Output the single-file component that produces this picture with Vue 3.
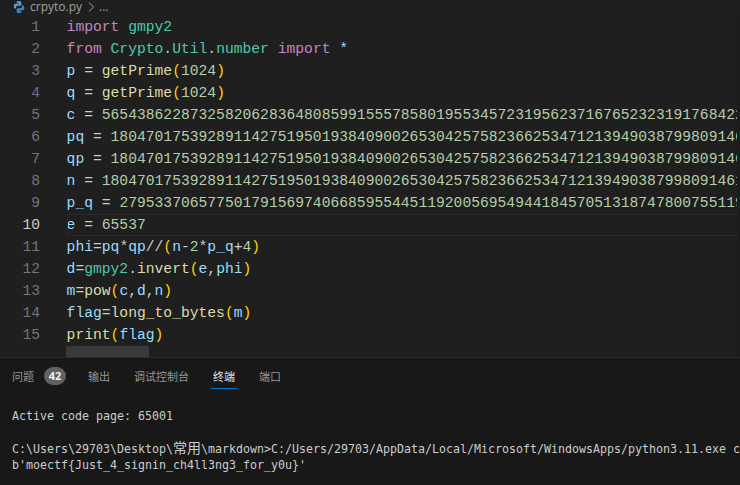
<script setup>
const kw = 'k', fn = 'f', v = 'v', num = 'n', cls = 'c', op = 'o', br = 'b';
const lines = [
  [[kw, 'import'], [op, ' '], [cls, 'gmpy2']],
  [[kw, 'from'], [op, ' '], [cls, 'Crypto'], [op, '.'], [cls, 'Util'], [op, '.'], [cls, 'number'], [op, ' '], [kw, 'import'], [op, ' '], [v, '*']],
  [[v, 'p'], [op, ' = '], [fn, 'getPrime'], [br, '('], [num, '1024'], [br, ')']],
  [[v, 'q'], [op, ' = '], [fn, 'getPrime'], [br, '('], [num, '1024'], [br, ')']],
  [[v, 'c'], [op, ' = '], [num, '5654386228732582062836480859915557858019553457231956237167652323191768422']],
  [[v, 'pq'], [op, ' = '], [num, '180470175392891142751950193840900265304257582366253471213949038799809146']],
  [[v, 'qp'], [op, ' = '], [num, '180470175392891142751950193840900265304257582366253471213949038799809146']],
  [[v, 'n'], [op, ' = '], [num, '1804701753928911427519501938409002653042575823662534712139490387998091461']],
  [[v, 'p_q'], [op, ' = '], [num, '27953370657750179156974066859554451192005695494418457051318747800755119']],
  [[v, 'e'], [op, ' = '], [num, '65537']],
  [[v, 'phi'], [op, '='], [v, 'pq'], [op, '*'], [v, 'qp'], [op, '//'], [br, '('], [v, 'n'], [op, '-'], [num, '2'], [op, '*'], [v, 'p_q'], [op, '+'], [num, '4'], [br, ')']],
  [[v, 'd'], [op, '='], [cls, 'gmpy2'], [op, '.'], [fn, 'invert'], [br, '('], [v, 'e'], [op, ','], [v, 'phi'], [br, ')']],
  [[v, 'm'], [op, '='], [fn, 'pow'], [br, '('], [v, 'c'], [op, ','], [v, 'd'], [op, ','], [v, 'n'], [br, ')']],
  [[v, 'flag'], [op, '='], [fn, 'long_to_bytes'], [br, '('], [v, 'm'], [br, ')']],
  [[fn, 'print'], [br, '('], [v, 'flag'], [br, ')']],
];
const tabs = ['问题', '输出', '调试控制台', '终端', '端口'];
</script>

<template>
  <div class="app">
    <div class="crumbs">
      <svg class="py" width="14" height="14" viewBox="0 0 16 16">
        <path fill="#5a9fd4" d="M7.900 1C5 1 5.200 2.300 5.200 2.300v1.400h2.800v.5H3.900S2 4 2 6.900s1.700 2.800 1.700 2.800h1V8.300s-.1-1.700 1.600-1.700h2.800s1.600 0 1.600-1.500V2.600S10.400 1 7.900 1zM6.400 1.900a.5.500 0 1 1 0 1 .5.500 0 0 1 0-1z"/>
        <path fill="#4a86b8" d="M8.100 15c2.900 0 2.700-1.300 2.700-1.300v-1.400H8v-.5h4.100S14 12 14 9.100s-1.700-2.800-1.700-2.800h-1v1.400s.1 1.700-1.600 1.700H6.900s-1.600 0-1.600 1.500v2.500S5.600 15 8.100 15zm1.500-.9a.5.500 0 1 1 0-1 .5.500 0 0 1 0 1z"/>
      </svg>
      <span class="file">crpyto.py</span>
      <svg width="10" height="12" viewBox="0 0 10 12" class="chev"><path d="M3 1.500l4.500 4.500-4.500 4.500" fill="none" stroke="#a0a0a0" stroke-width="1"/></svg>
      <span>...</span>
    </div>
    <div class="editor">
      <div v-for="(line, i) in lines" :key="i" class="row" :class="{ active: i === 9 }">
        <span class="ln">{{ i + 1 }}</span>
        <code class="code"><span v-for="(t, j) in line" :key="j" :class="t[0]">{{ t[1] }}</span></code>
      </div>
      <div class="scrollthumb"></div>
      <div class="ruler"></div>
    </div>
    <div class="panel">
      <div class="tabs">
        <div v-for="(t, i) in tabs" :key="t" class="tab" :class="{ on: i === 3 }">
          {{ t }}<span v-if="i === 0" class="badge">42</span>
        </div>
      </div>
      <div class="term">
        <div>Active code page: 65001</div>
        <div>&nbsp;</div>
        <div>C:\Users\29703\Desktop\<span class="cjk">常用</span>\markdown&gt;C:/Users/29703/AppData/Local/Microsoft/WindowsApps/python3.11.exe c</div>
        <div>b'moectf{Just_4_signin_ch4ll3ng3_for_y0u}'</div>
      </div>
    </div>
  </div>
</template>

<style>
html, body { margin: 0; background: #181818; overflow: hidden; }
</style>

<style scoped>
.app { width: 740px; height: 485px; display: flex; flex-direction: column; overflow: hidden; background: #1f1f1f; }
.crumbs { height: 16px; box-sizing: border-box; padding: 0 0 2px 12px; display: flex; align-items: center; font: 12px/14px "Open Sans", "Noto Sans", sans-serif; color: #a0a0a0; overflow: hidden; }
.py { flex: none; margin-right: 4px; }
.file { margin-right: 4px; }
.chev { flex: none; margin-right: 3px; }
.editor { position: relative; height: 341px; border-bottom: 1px solid #2b2b2b; overflow: hidden; }
.row { height: 22px; display: flex; align-items: center; box-sizing: border-box; white-space: pre; font: 14.67px/22px "Liberation Mono", monospace; }
.row.active .code { outline: 1px solid #2a2a2a; outline-offset: -1px; flex: 1; height: 22px; }
.ln { width: 40px; flex: none; text-align: right; color: #6e7681; margin-right: 26.6px; }
.active .ln { color: #cccccc; }
.code { font: inherit; }
.k { color: #c586c0; }
.c { color: #4ec9b0; }
.f { color: #dcdcaa; }
.v { color: #9cdcfe; }
.n { color: #b5cea8; }
.o { color: #cccccc; }
.b { color: #ffd700; }
.scrollthumb { position: absolute; left: 66px; top: 330px; width: 83px; height: 11px; background: #3a3a3a; }
.ruler { position: absolute; right: 0; top: 0; bottom: 0; width: 3px; background: #1c1c1c; }
.panel { flex: 1; background: #181818; display: flex; flex-direction: column; }
.tabs { display: flex; gap: 24px; height: 35px; padding: 0 12px; align-items: center; font: 11px "Noto Sans CJK SC", sans-serif; color: #969696; }
.tab { position: relative; display: flex; align-items: center; height: 24px; }
.tab.on { color: #e0e0e0; }
.tab.on::after { content: ""; position: absolute; left: -2px; right: -2px; bottom: -1px; height: 1px; background: #0078d4; }
.badge { margin: 0 -2px 0 10px; min-width: 22px; height: 18px; border-radius: 9px; background: #616161; color: #f0f0f0; text-align: center; font: 700 11px/18px "Open Sans", sans-serif; }
.term { padding: 15px 0 0 12px; font: 11.63px/16px "DejaVu Sans Mono", "Noto Sans CJK SC", monospace; color: #cccccc; white-space: pre; }
.cjk { font: 14px/1 "Noto Sans CJK SC", sans-serif; }
</style>
